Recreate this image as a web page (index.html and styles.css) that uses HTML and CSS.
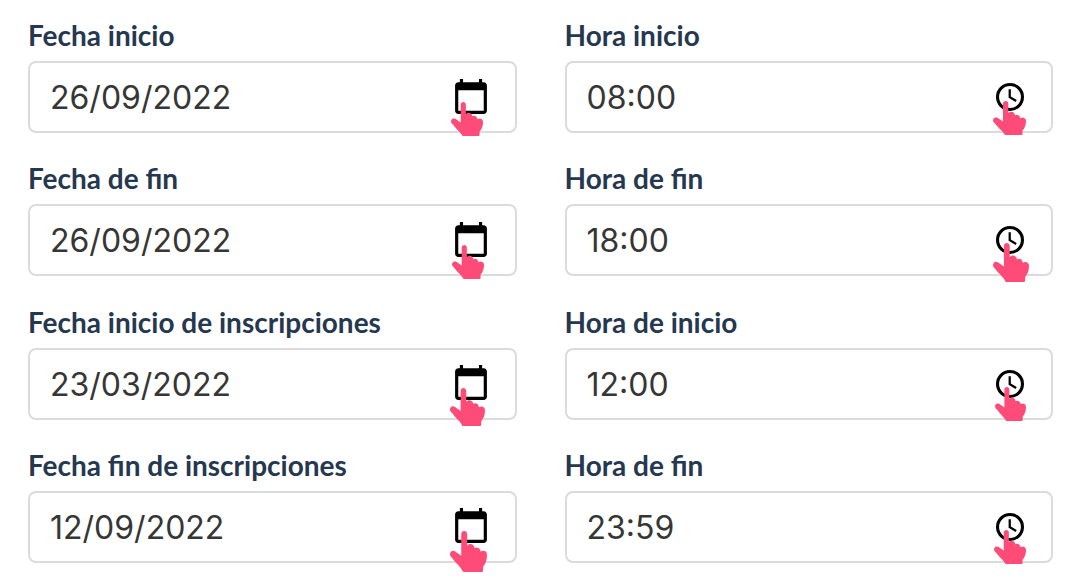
FILE: index.html
```html
<!DOCTYPE html>
<html lang="es">
<head>
<meta charset="utf-8">
<meta name="viewport" content="width=device-width, initial-scale=1">
<title>Fechas y horas</title>
<link rel="stylesheet" href="styles.css">
</head>
<body>
<svg class="symbols" aria-hidden="true">
  <symbol id="calendar" viewBox="2 1 20 22"><path d="M20 3h-1V1h-2v2H7V1H5v2H4c-1.1 0-2 .9-2 2v16c0 1.1.9 2 2 2h16c1.1 0 2-.9 2-2V5c0-1.1-.9-2-2-2zm0 18H4V8h16v13z"/></symbol>
  <symbol id="clock" viewBox="2 2 20 20"><path d="M12 2a10 10 0 1 0 0 20 10 10 0 0 0 0-20zm0 17.8a7.800 7.800 0 1 1 0-15.600 7.800 7.800 0 0 1 0 15.600z"/><path d="M12.600 6.500h-1.600v6l5 3 .8-1.300-4.200-2.500z"/></symbol>
  <symbol id="hand" viewBox="0 0 112 121" preserveAspectRatio="none"><path d="M34 10C34-3 52-3 52 10V44C57 36 72 36 75 51C81 46 91 50 93 61C102 55 112 61 112 70C112 85 109 94 100 106V117Q100 121 96 121H42Q38 121 37 116C32 106 16 94 7 80C0 75-1 69 1 64C4 58 10 57 15 60L34 73Z"/></symbol>
</svg>
<form class="schedule">
  <div class="field">
    <label class="label" for="start-date">Fecha inicio</label>
    <div class="control">
      <input class="input" id="start-date" type="text" value="26/09/2022">
      <button class="picker" type="button" aria-label="Elegir fecha"><svg class="calendar"><use href="#calendar"/></svg></button>
      <svg class="hand hand-1"><use href="#hand"/></svg>
    </div>
  </div>
  <div class="field">
    <label class="label" for="start-time">Hora inicio</label>
    <div class="control">
      <input class="input" id="start-time" type="text" value="08:00">
      <button class="picker" type="button" aria-label="Elegir hora"><svg class="clock"><use href="#clock"/></svg></button>
      <svg class="hand hand-2"><use href="#hand"/></svg>
    </div>
  </div>
  <div class="field">
    <label class="label" for="end-date">Fecha de fin</label>
    <div class="control">
      <input class="input" id="end-date" type="text" value="26/09/2022">
      <button class="picker" type="button" aria-label="Elegir fecha"><svg class="calendar"><use href="#calendar"/></svg></button>
      <svg class="hand hand-3"><use href="#hand"/></svg>
    </div>
  </div>
  <div class="field">
    <label class="label" for="end-time">Hora de fin</label>
    <div class="control">
      <input class="input" id="end-time" type="text" value="18:00">
      <button class="picker" type="button" aria-label="Elegir hora"><svg class="clock"><use href="#clock"/></svg></button>
      <svg class="hand hand-4"><use href="#hand"/></svg>
    </div>
  </div>
  <div class="field">
    <label class="label" for="signup-start-date">Fecha inicio de inscripciones</label>
    <div class="control">
      <input class="input" id="signup-start-date" type="text" value="23/03/2022">
      <button class="picker" type="button" aria-label="Elegir fecha"><svg class="calendar"><use href="#calendar"/></svg></button>
      <svg class="hand hand-5"><use href="#hand"/></svg>
    </div>
  </div>
  <div class="field">
    <label class="label" for="signup-start-time">Hora de inicio</label>
    <div class="control">
      <input class="input" id="signup-start-time" type="text" value="12:00">
      <button class="picker" type="button" aria-label="Elegir hora"><svg class="clock"><use href="#clock"/></svg></button>
      <svg class="hand hand-6"><use href="#hand"/></svg>
    </div>
  </div>
  <div class="field">
    <label class="label" for="signup-end-date">Fecha fin de inscripciones</label>
    <div class="control">
      <input class="input" id="signup-end-date" type="text" value="12/09/2022">
      <button class="picker" type="button" aria-label="Elegir fecha"><svg class="calendar"><use href="#calendar"/></svg></button>
      <svg class="hand hand-7"><use href="#hand"/></svg>
    </div>
  </div>
  <div class="field">
    <label class="label" for="signup-end-time">Hora de fin</label>
    <div class="control">
      <input class="input" id="signup-end-time" type="text" value="23:59">
      <button class="picker" type="button" aria-label="Elegir hora"><svg class="clock"><use href="#clock"/></svg></button>
      <svg class="hand hand-8"><use href="#hand"/></svg>
    </div>
  </div>
</form>
</body>
</html>
```
FILE: styles.css
```css
* { box-sizing: border-box; }
body { margin: 0; background: #fff; }
.symbols { position: absolute; width: 0; height: 0; }
.schedule {
  display: grid;
  grid-template-columns: 1fr 1fr;
  column-gap: 48px;
  row-gap: 24px;
  align-content: space-between;
  min-height: 100vh;
  padding: 18px 31px 23px 28px;
}
.field { display: flex; flex-direction: column; gap: 9px; min-width: 0; }
.label { font: 700 28px/34px Lato, sans-serif; color: #26384f; }
.control {
  position: relative;
  display: flex;
  align-items: center;
  height: 72px;
  padding: 0 27px 0 20px;
  border: 2px solid #dbdbdb;
  border-radius: 8px;
  background: #fff;
}
.input {
  flex: 1;
  min-width: 0;
  padding: 2px 0 0;
  border: 0;
  outline: 0;
  background: none;
  font: 400 32px/40px Inter, sans-serif;
  color: #363636;
}
.picker { display: flex; padding: 0; border: 0; background: none; color: #000; }
.picker svg { display: block; fill: currentColor; }
.calendar { width: 32px; height: 35px; margin: 0 1px 2px 0; }
.clock { width: 28px; height: 28px; }

/* Pointers lie over the picker icons */
.hand { position: absolute; fill: #ff4b77; pointer-events: none; width: 32px; height: 34px; }
.hand-1 { right: 32px; top: 39px; }
.hand-2 { right: 25px; top: 38px; width: 33px; }
.hand-3 { right: 31px; top: 39px; }
.hand-4 { right: 22px; top: 37px; width: 36px; height: 39px; }
.hand-5 { right: 30px; top: 38px; width: 35px; height: 38px; }
.hand-6 { right: 25px; top: 37px; width: 31px; }
.hand-7 { right: 28px; top: 38px; width: 37px; height: 41px; }
.hand-8 { right: 25px; top: 37px; }
```
